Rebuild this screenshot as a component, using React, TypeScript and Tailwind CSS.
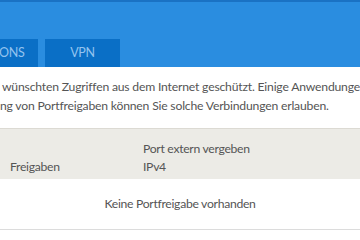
import React from 'react';

const App = () => {
  return (
    <div className="w-[360px] h-[240px] overflow-hidden bg-white text-[#555] font-['Lato',sans-serif] tracking-[-0.3px]">
      <header className="h-[67px] bg-[#2a8de0] border-t-2 border-[#1a72c4] flex items-end">
        <div className="flex gap-[7px]">
          <div className="w-[38px] h-[28px] bg-[#0a6fc6] text-[#93c3ef] text-[12.5px] flex items-center">
            <span className="-ml-[1px]">ONS</span>
          </div>
          <div className="w-[75px] h-[28px] bg-[#0a6fc6] text-[#93c3ef] text-[12.5px] flex items-center justify-center">
            VPN
          </div>
        </div>
      </header>
      <div className="pt-[10px] pb-[13px] text-[12.2px] leading-[19px] whitespace-nowrap tracking-[-0.2px]">
        <p className="pl-[2px]">wünschten Zugriffen aus dem Internet geschützt. Einige Anwendungen</p>
        <p>ng von Portfreigaben können Sie solche Verbindungen erlauben.</p>
      </div>
      <div className="h-[51px] bg-[#ecebe6] border-t border-[#dcdad3] flex items-end pb-[3px] text-[12.2px] leading-[18px]">
        <div className="w-[143px] pl-[10px]">Freigaben</div>
        <div className="flex flex-col">
          <span>Port extern vergeben</span>
          <span>IPv4</span>
        </div>
      </div>
      <div className="h-[51px] border-b border-[#dcdcdc] flex items-center justify-center text-[12.2px]">
        Keine Portfreigabe vorhanden
      </div>
    </div>
  );
};

export default App;
